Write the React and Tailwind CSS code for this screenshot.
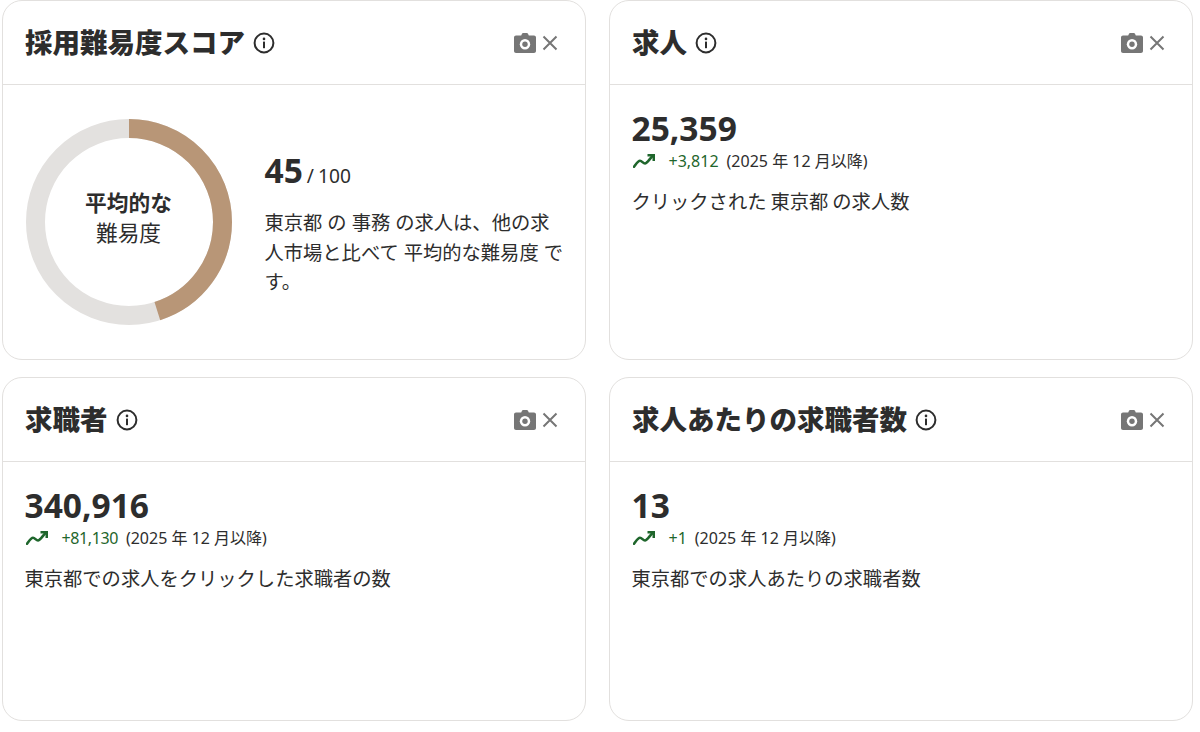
const fontStack = '[font-family:"Noto_Sans","Noto_Sans_CJK_JP",sans-serif]';

const InfoIcon = () => (
  <svg width="22" height="22" viewBox="0 0 22 22" fill="none" className="shrink-0">
    <circle cx="11" cy="11" r="9.4" stroke="#2d2d2d" strokeWidth="2" />
    <circle cx="11" cy="6.9" r="1.3" fill="#2d2d2d" />
    <rect x="10" y="9.6" width="2" height="6.6" fill="#2d2d2d" />
  </svg>
);

const CameraIcon = () => (
  <svg width="22" height="20" viewBox="0 0 22 20">
    <path
      d="M7.2 2.6 8 .8C8.2.3 8.6 0 9.2 0h3.6c.6 0 1 .3 1.2.8l.8 1.8h5.2c1.1 0 2 .9 2 2V18c0 1.1-.9 2-2 2H2c-1.1 0-2-.9-2-2V4.6c0-1.1.9-2 2-2z"
      fill="#767676"
    />
    <circle cx="11" cy="11.2" r="5.2" fill="#fff" />
    <circle cx="11" cy="11.2" r="2.7" fill="#767676" />
  </svg>
);

const CloseIcon = () => (
  <svg width="16" height="16" viewBox="0 0 16 16" fill="none">
    <path d="M1.5 1.5 14.5 14.5M14.5 1.5 1.5 14.5" stroke="#767676" strokeWidth="2" />
  </svg>
);

const TrendIcon = () => (
  <svg width="22" height="14" viewBox="0 0 22 14" fill="none" className="ml-[1px] mr-[14px] shrink-0">
    <path
      d="M1 12.8C3.5 9.5 5 6.8 7 6.8C9 6.8 10 9.5 12 9.5C14 9.5 16 5.5 20 1.5"
      stroke="#1f662c"
      strokeWidth="2.6"
      strokeLinecap="round"
    />
    <path d="M14.5 1.2H20.8V7" stroke="#1f662c" strokeWidth="2.6" />
  </svg>
);

const Card = ({ title, children }) => (
  <div className="flex flex-col rounded-[20px] border-[1.5px] border-[#e2e0de] bg-white">
    <div className="flex h-[84px] shrink-0 items-center justify-between border-b-[1.5px] border-[#e2e0de] pl-[22px] pr-[27px]">
      <div className="flex items-center gap-[8px]">
        <span className="text-[27.5px] font-black leading-none text-[#2d2d2d]">{title}</span>
        <InfoIcon />
      </div>
      <div className="flex items-center gap-[6px]">
        <CameraIcon />
        <CloseIcon />
      </div>
    </div>
    {children}
  </div>
);

const Metric = ({ value, delta, deltaClass = '', description }) => (
  <div className="flex flex-col px-[21.5px] pt-[23px]">
    <div className="text-[33.5px] font-bold leading-[40px] text-[#2d2d2d]">{value}</div>
    <div className="mt-[2px] flex items-center text-[16px] leading-[22px]">
      <TrendIcon />
      <span className={`text-[#1f662c] ${deltaClass}`}>{delta}</span>
      <span className="ml-[8px] text-[#2d2d2d]">(2025 年 12 月以降)</span>
    </div>
    <p className="mt-[17px] text-[19.3px] leading-[26px] text-[#2d2d2d] [word-spacing:-1px]">{description}</p>
  </div>
);

const Donut = () => (
  <div className="relative h-[206px] w-[206px] shrink-0">
    <svg width="206" height="206" viewBox="0 0 206 206" className="-rotate-90">
      <circle cx="103" cy="103" r="93.5" fill="none" stroke="#e3e1df" strokeWidth="19" />
      <circle
        cx="103"
        cy="103"
        r="93.5"
        fill="none"
        stroke="#b89677"
        strokeWidth="19"
        strokeDasharray="264.4 323"
      />
    </svg>
    <div className="absolute inset-0 flex flex-col items-center justify-center pb-[8px] text-[#2d2d2d]">
      <span className="text-[21.7px] font-bold leading-[30px]">平均的な</span>
      <span className="text-[21.7px] leading-[30px]">難易度</span>
    </div>
  </div>
);

export default function App() {
  return (
    <div className={`${fontStack} grid h-[732px] w-[1200px] grid-cols-[584px_584px] grid-rows-[360px_344px] content-start gap-x-[23px] gap-y-[17px] bg-white pl-[2px]`}>
      <Card title="採用難易度スコア">
        <div className="flex items-start pl-[22.5px] pt-[34px]">
          <Donut />
          <div className="ml-[33px] mt-[29px] w-[302px]">
            <div className="flex items-baseline text-[#2d2d2d]">
              <span className="text-[33.5px] font-bold leading-[44px]">45</span>
              <span className="ml-[4px] text-[19.2px] leading-[44px] [word-spacing:-1px]">/ 100</span>
            </div>
            <p className="mt-[10px] text-[19.3px] leading-[29.5px] text-[#2d2d2d]">
              東京都 の 事務 の求人は、他の求人市場と比べて 平均的な難易度 です。
            </p>
          </div>
        </div>
      </Card>
      <Card title="求人">
        <Metric value="25,359" delta="+3,812" description="クリックされた 東京都 の求人数" />
      </Card>
      <Card title="求職者">
        <Metric value="340,916" delta="+81,130" deltaClass="tracking-[-0.4px]" description="東京都での求人をクリックした求職者の数" />
      </Card>
      <Card title="求人あたりの求職者数">
        <Metric value="13" delta="+1" description="東京都での求人あたりの求職者数" />
      </Card>
    </div>
  );
}
